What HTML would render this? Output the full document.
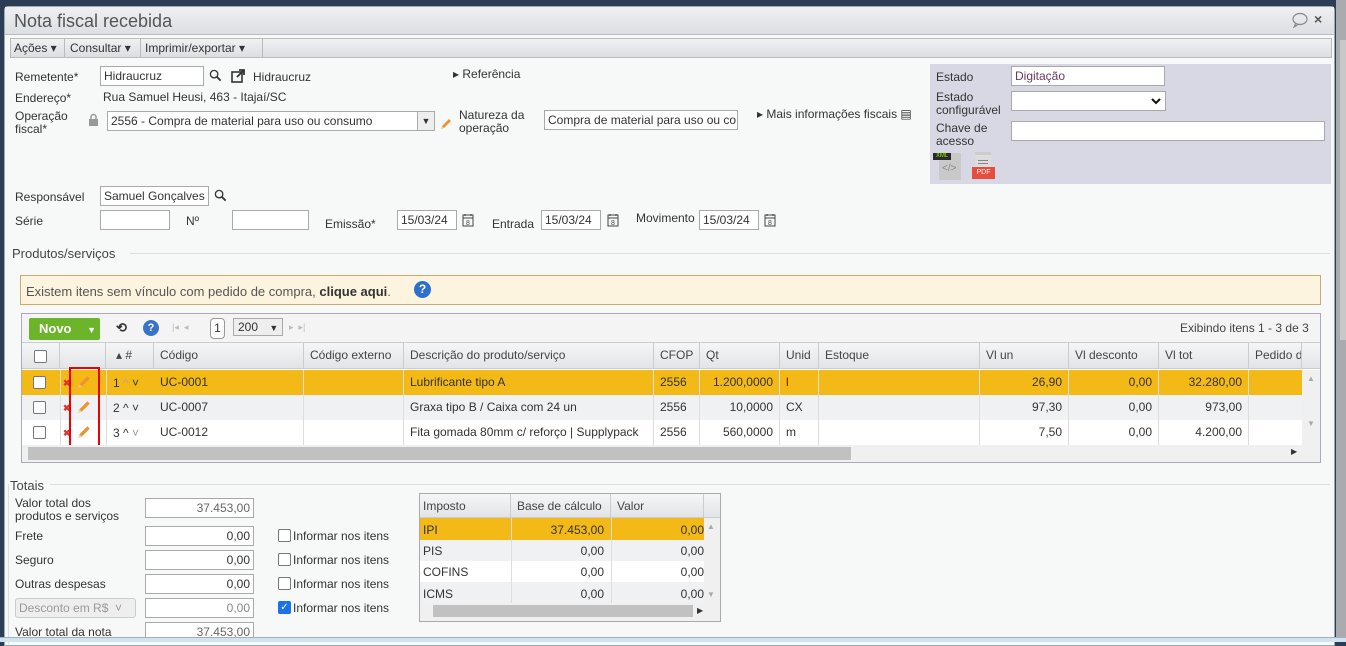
<!DOCTYPE html>
<html><head><meta charset="utf-8"><style>
*{box-sizing:border-box;margin:0;padding:0}
body{width:1346px;height:642px;overflow:hidden;background:#2c3e55;font-family:"Liberation Sans",Arial,sans-serif;font-size:12px;color:#333;position:relative}
.a{position:absolute}
.win{left:4px;top:6px;width:1331px;height:640px;background:#f7f8f8;border:1px solid #9aa;border-radius:4px 4px 0 0}
.title{left:5px;top:7px;width:1329px;height:28px;background:linear-gradient(#eef0f2,#dcdfe3);border-bottom:1px solid #b8bcc2}
.inp{position:absolute;background:#fff;border:1px solid #a9a9a9;height:20px;font-size:12px;padding:2px 3px;white-space:nowrap;overflow:hidden}
.lbl{position:absolute;font-size:12px;color:#333;line-height:13px}
.hd{position:absolute;top:342px;height:27px;line-height:27px;padding-left:6px;border-right:1px solid #ccc;color:#444;font-size:12px}
.cell{position:absolute;height:25px;line-height:25px;padding:0 6px;border-right:1px solid #ddd;font-size:12px;white-space:nowrap;overflow:hidden}
.r{text-align:right}
.cb{position:absolute;width:13px;height:13px;border:1px solid #777;border-radius:2px;background:#fff}
</style></head><body>
<svg width="0" height="0" style="position:absolute"><defs>
<symbol id="mag" viewBox="0 0 14 14"><circle cx="5.5" cy="5.5" r="4" fill="none" stroke="#333" stroke-width="1.4"/><path d="M8.5 8.5 L12.5 12.5" stroke="#333" stroke-width="2"/></symbol>
<symbol id="cal" viewBox="0 0 12 14"><rect x="1" y="2" width="10" height="11" fill="none" stroke="#444" stroke-width="1"/><path d="M3 1V3M9 1V3M1 5H11" stroke="#444"/><text x="6" y="12" font-size="7" text-anchor="middle" fill="#444" font-family="Liberation Sans">8</text></symbol>
<symbol id="pen" viewBox="0 0 14 14"><path d="M2 12 L3 9 L10 2 L12 4 L5 11 Z" fill="#f0922e"/><path d="M2 12 L3 9 L5 11 Z" fill="#f6d0a0"/></symbol>
</defs></svg>
<div class="a" style="left:1336px;top:0;width:10px;height:642px;background:#a9abae"></div>
<div class="a" style="left:1340px;top:40px;width:6px;height:300px;background:#c8c8c8"></div>
<div class="a win"></div>
<div class="a title"></div>
<div class="a" style="left:14px;top:11px;font-size:18px;color:#555">Nota fiscal recebida</div>
<svg class="a" style="left:1291px;top:12px" width="18" height="16"><ellipse cx="9" cy="7" rx="7" ry="5.5" fill="none" stroke="#888" stroke-width="1.2"/><path d="M5 11 L3 15 L8 12" fill="none" stroke="#888" stroke-width="1.2"/></svg>
<div class="a" style="left:1314px;top:11px;font-size:14px;font-weight:bold;color:#555">×</div>
<div class="a" style="left:10px;top:38px;width:1322px;height:20px;background:linear-gradient(#f0f1f3,#dcdee2);border:1px solid #bbb"></div>
<div class="a" style="left:14px;top:41px;color:#333">Ações ▾</div>
<div class="a" style="left:64px;top:38px;width:1px;height:20px;background:#bbb"></div>
<div class="a" style="left:70px;top:41px">Consultar ▾</div>
<div class="a" style="left:140px;top:38px;width:1px;height:20px;background:#bbb"></div>
<div class="a" style="left:145px;top:41px">Imprimir/exportar ▾</div>
<div class="a" style="left:262px;top:38px;width:1px;height:20px;background:#bbb"></div>
<div class="lbl" style="left:15px;top:71px">Remetente*</div>
<div class="inp" style="left:100px;top:66px;width:104px">Hidraucruz</div>
<svg class="a" style="left:209px;top:69px" width="13" height="13"><use href="#mag"/></svg>
<svg class="a" style="left:231px;top:69px" width="15" height="15"><rect x="1" y="3" width="10" height="10" fill="none" stroke="#333" stroke-width="1.6"/><path d="M6 8 L13 1 M8 1 H13 V6" stroke="#333" stroke-width="1.8" fill="none"/></svg>
<div class="lbl" style="left:253px;top:71px">Hidraucruz</div>
<div class="lbl" style="left:453px;top:68px">▸ Referência</div>
<div class="lbl" style="left:15px;top:92px">Endereço*</div>
<div class="lbl" style="left:103px;top:91px">Rua Samuel Heusi, 463 - Itajaí/SC</div>
<div class="lbl" style="left:15px;top:110px">Operação<br>fiscal*</div>
<svg class="a" style="left:88px;top:113px" width="11" height="14"><path d="M3 6V4a2.5 2.5 0 0 1 5 0v2" fill="none" stroke="#999" stroke-width="1.5"/><rect x="1" y="6" width="9" height="7" fill="#999"/></svg>
<div class="inp" style="left:107px;top:111px;width:328px">2556 - Compra de material para uso ou consumo</div>
<div class="a" style="left:417px;top:112px;width:17px;height:18px;background:#eee;border-left:1px solid #aaa;font-size:9px;text-align:center;line-height:18px">▼</div>
<svg class="a" style="left:439px;top:117px" width="14" height="14"><use href="#pen"/></svg>
<div class="lbl" style="left:459px;top:109px">Natureza da<br>operação</div>
<div class="inp" style="left:544px;top:110px;width:194px;height:20px">Compra de material para uso ou co</div>
<div class="lbl" style="left:757px;top:108px">▸ Mais informações fiscais ▤</div>
<div class="a" style="left:930px;top:64px;width:401px;height:120px;background:#d8d8e4"></div>
<div class="lbl" style="left:936px;top:71px">Estado</div>
<div class="inp" style="left:1011px;top:66px;width:154px;color:#6a3a5a">Digitação</div>
<div class="lbl" style="left:936px;top:91px">Estado<br>configurável</div>
<div class="inp" style="left:1011px;top:91px;width:155px"></div>
<svg class="a" style="left:1151px;top:97px" width="10" height="8"><path d="M1 2 L5 6 L9 2" fill="none" stroke="#111" stroke-width="2"/></svg>
<div class="lbl" style="left:936px;top:122px">Chave de<br>acesso</div>
<div class="inp" style="left:1011px;top:121px;width:314px"></div>
<div class="a" style="left:939px;top:153px;width:22px;height:27px;background:#c9c9c9"></div>
<div class="a" style="left:933px;top:153px;width:18px;height:7px;background:#2a2a2a;color:#9f0;font-size:6px;line-height:7px;text-align:center">XML</div>
<div class="a" style="left:942px;top:163px;color:#888;font-size:10px">&lt;/&gt;</div>
<div class="a" style="left:975px;top:152px;width:16px;height:26px;background:#ddd;border-top:3px solid #ccc"></div>
<div class="a" style="left:978px;top:160px;width:10px;height:1px;background:#888"></div>
<div class="a" style="left:978px;top:163px;width:10px;height:1px;background:#888"></div>
<div class="a" style="left:972px;top:167px;width:23px;height:12px;background:#e74c3c;color:#fff;font-size:7px;line-height:12px;text-align:center">PDF</div>
<div class="lbl" style="left:15px;top:191px">Responsável</div>
<div class="inp" style="left:100px;top:186px;width:109px">Samuel Gonçalves</div>
<svg class="a" style="left:214px;top:189px" width="13" height="13"><use href="#mag"/></svg>
<div class="lbl" style="left:15px;top:215px">Série</div>
<div class="inp" style="left:100px;top:210px;width:70px"></div>
<div class="lbl" style="left:186px;top:215px">Nº</div>
<div class="inp" style="left:232px;top:210px;width:77px"></div>
<div class="lbl" style="left:325px;top:218px">Emissão*</div>
<div class="inp" style="left:397px;top:210px;width:60px">15/03/24</div>
<svg class="a" style="left:462px;top:213px" width="12" height="14"><use href="#cal"/></svg>
<div class="lbl" style="left:492px;top:218px">Entrada</div>
<div class="inp" style="left:541px;top:210px;width:60px">15/03/24</div>
<svg class="a" style="left:607px;top:213px" width="12" height="14"><use href="#cal"/></svg>
<div class="lbl" style="left:636px;top:212px">Movimento</div>
<div class="inp" style="left:699px;top:210px;width:60px">15/03/24</div>
<svg class="a" style="left:764px;top:213px" width="12" height="14"><use href="#cal"/></svg>
<div class="a" style="left:12px;top:246px;font-size:13px;color:#444">Produtos/serviços</div>
<div class="a" style="left:130px;top:253px;width:1200px;height:1px;background:#ddd"></div>
<div class="a" style="left:20px;top:275px;width:1301px;height:30px;background:#fcf4de;border:1px solid #c8aa6a"></div>
<div class="a" style="left:26px;top:284px;font-size:13px;color:#555">Existem itens sem vínculo com pedido de compra, <b style="color:#333">clique aqui</b>.</div>
<div class="a" style="left:414px;top:281px;width:17px;height:17px;border-radius:50%;background:#2d6fd0;color:#fff;font-size:12px;font-weight:bold;text-align:center;line-height:17px">?</div>
<div class="a" style="left:21px;top:313px;width:1300px;height:150px;border:1px solid #aab;background:#fff"></div>
<div class="a" style="left:22px;top:314px;width:1298px;height:28px;background:#f4f4f4"></div>
<div class="a" style="left:29px;top:318px;width:71px;height:22px;background:#6cb52a;border-radius:2px;color:#fff;font-weight:bold;font-size:13px;line-height:22px;padding-left:10px">Novo <span style="font-size:9px;margin-left:12px">▼</span></div>
<div class="a" style="left:116px;top:320px;font-size:13px;font-weight:bold">⟲</div>
<div class="a" style="left:143px;top:320px;width:16px;height:16px;border-radius:50%;background:#3a74c8;color:#fff;font-size:11px;font-weight:bold;text-align:center;line-height:16px">?</div>
<div class="a" style="left:172px;top:322px;color:#bbb;font-size:9px">|◂ &nbsp;◂</div>
<div class="a" style="left:210px;top:318px;width:15px;height:21px;border:1px solid #999;border-radius:4px;background:#fff;text-align:center;line-height:19px">1</div>
<div class="a" style="left:233px;top:318px;width:50px;height:18px;border:1px solid #aaa;background:#eee;padding-left:4px;line-height:16px">200 <span style="font-size:9px;margin-left:8px">▼</span></div>
<div class="a" style="left:289px;top:322px;color:#bbb;font-size:9px">▸ &nbsp;▸|</div>
<div class="a" style="left:1180px;top:321px;color:#444">Exibindo itens 1 - 3 de 3</div>
<div class="a" style="left:22px;top:342px;width:1298px;height:27px;background:linear-gradient(#f5f6f7,#e2e4e7);border-top:1px solid #ccc;border-bottom:1px solid #ccc"></div>
<div class="hd" style="left:22px;width:38px"></div><div class="cb" style="left:34px;top:350px"></div>
<div class="hd" style="left:60px;width:46px"></div>
<div class="hd" style="left:106px;width:48px;padding-left:10px">▴ #</div>
<div class="hd" style="left:154px;width:150px">Código</div>
<div class="hd" style="left:304px;width:100px">Código externo</div>
<div class="hd" style="left:404px;width:250px">Descrição do produto/serviço</div>
<div class="hd" style="left:654px;width:46px">CFOP</div>
<div class="hd" style="left:700px;width:80px">Qt</div>
<div class="hd" style="left:780px;width:39px">Unid</div>
<div class="hd" style="left:819px;width:161px">Estoque</div>
<div class="hd" style="left:980px;width:89px">Vl un</div>
<div class="hd" style="left:1069px;width:90px">Vl desconto</div>
<div class="hd" style="left:1159px;width:90px">Vl tot</div>
<div class="hd" style="left:1249px;width:53px;overflow:hidden;white-space:nowrap">Pedido de</div>
<div class="a" style="left:22px;top:370px;width:1280px;height:25px;background:#f3b916"></div>
<div class="a" style="left:22px;top:395px;width:1280px;height:25px;background:#f0f1f2"></div>
<div class="a" style="left:22px;top:420px;width:1280px;height:25px;background:#fff"></div>
<div class="a" style="left:1302px;top:370px;width:18px;height:75px;background:#f0f0f0;color:#aaa;font-size:8px;text-align:center;padding-top:4px">▲<br><br><br><br><br>▼</div>
<div class="cb" style="left:33px;top:376px"></div><div class="cb" style="left:33px;top:401px"></div><div class="cb" style="left:33px;top:426px"></div>
<div class="a" style="left:60px;top:370px;width:1px;height:75px;background:#ddd"></div>
<div class="a" style="left:106px;top:370px;width:1px;height:75px;background:#ddd"></div>
<div class="a" style="left:63px;top:378px;color:#d33;font-size:9px;font-weight:bold">✖</div><svg class="a" style="left:76px;top:374px" width="16" height="16"><use href="#pen"/></svg>
<div class="a" style="left:63px;top:403px;color:#d33;font-size:9px;font-weight:bold">✖</div><svg class="a" style="left:76px;top:399px" width="16" height="16"><use href="#pen"/></svg>
<div class="a" style="left:63px;top:428px;color:#d33;font-size:9px;font-weight:bold">✖</div><svg class="a" style="left:76px;top:424px" width="16" height="16"><use href="#pen"/></svg>
<div class="a" style="left:69px;top:367px;width:31px;height:84px;border:2px solid #e00"></div>
<div class="a" style="left:113px;top:376px">1 <span style="color:#c9a">^</span> ˅</div>
<div class="a" style="left:113px;top:401px">2 ^ ˅</div>
<div class="a" style="left:113px;top:426px">3 ^ <span style="color:#999">˅</span></div>
<div class="cell" style="left:154px;top:370px;width:150px">UC-0001</div><div class="cell" style="left:304px;top:370px;width:100px"></div><div class="cell" style="left:404px;top:370px;width:250px">Lubrificante tipo A</div><div class="cell" style="left:654px;top:370px;width:46px">2556</div><div class="cell r" style="left:700px;top:370px;width:80px">1.200,0000</div><div class="cell" style="left:780px;top:370px;width:39px;color:#800">l</div><div class="cell" style="left:819px;top:370px;width:161px"></div><div class="cell r" style="left:980px;top:370px;width:89px">26,90</div><div class="cell r" style="left:1069px;top:370px;width:90px">0,00</div><div class="cell r" style="left:1159px;top:370px;width:90px">32.280,00</div>
<div class="cell" style="left:154px;top:395px;width:150px">UC-0007</div><div class="cell" style="left:304px;top:395px;width:100px"></div><div class="cell" style="left:404px;top:395px;width:250px">Graxa tipo B / Caixa com 24 un</div><div class="cell" style="left:654px;top:395px;width:46px">2556</div><div class="cell r" style="left:700px;top:395px;width:80px">10,0000</div><div class="cell" style="left:780px;top:395px;width:39px">CX</div><div class="cell" style="left:819px;top:395px;width:161px"></div><div class="cell r" style="left:980px;top:395px;width:89px">97,30</div><div class="cell r" style="left:1069px;top:395px;width:90px">0,00</div><div class="cell r" style="left:1159px;top:395px;width:90px">973,00</div>
<div class="cell" style="left:154px;top:420px;width:150px">UC-0012</div><div class="cell" style="left:304px;top:420px;width:100px"></div><div class="cell" style="left:404px;top:420px;width:250px">Fita gomada 80mm c/ reforço | Supplypack</div><div class="cell" style="left:654px;top:420px;width:46px">2556</div><div class="cell r" style="left:700px;top:420px;width:80px">560,0000</div><div class="cell" style="left:780px;top:420px;width:39px">m</div><div class="cell" style="left:819px;top:420px;width:161px"></div><div class="cell r" style="left:980px;top:420px;width:89px">7,50</div><div class="cell r" style="left:1069px;top:420px;width:90px">0,00</div><div class="cell r" style="left:1159px;top:420px;width:90px">4.200,00</div>
<div class="a" style="left:22px;top:445px;width:1298px;height:17px;background:#f0f0f0"></div>
<div class="a" style="left:28px;top:447px;width:823px;height:13px;background:#c1c1c1"></div>
<div class="a" style="left:1291px;top:447px;font-size:8px">▶</div>
<div class="a" style="left:10px;top:478px;font-size:13px;color:#444">Totais</div>
<div class="a" style="left:50px;top:484px;width:1280px;height:1px;background:#ddd"></div>
<div class="a" style="left:8px;top:484px;width:1px;height:160px;background:#ddd"></div>
<div class="lbl" style="left:15px;top:497px">Valor total dos<br>produtos e serviços</div>
<div class="inp r" style="left:145px;top:498px;width:109px;color:#666">37.453,00</div>
<div class="lbl" style="left:15px;top:530px">Frete</div>
<div class="inp r" style="left:145px;top:526px;width:109px">0,00</div>
<div class="lbl" style="left:15px;top:554px">Seguro</div>
<div class="inp r" style="left:145px;top:550px;width:109px">0,00</div>
<div class="lbl" style="left:15px;top:578px">Outras despesas</div>
<div class="inp r" style="left:145px;top:574px;width:109px">0,00</div>
<div class="inp" style="left:15px;top:598px;width:121px;background:#eee;color:#999;border-color:#ccc;border-radius:3px">Desconto em R$ &nbsp;˅</div>
<div class="inp r" style="left:145px;top:598px;width:109px;color:#888">0,00</div>
<div class="lbl" style="left:15px;top:626px">Valor total da nota</div>
<div class="inp r" style="left:145px;top:622px;width:109px;color:#666">37.453,00</div>
<div class="cb" style="left:278px;top:529px"></div><div class="lbl" style="left:293px;top:530px">Informar nos itens</div>
<div class="cb" style="left:278px;top:553px"></div><div class="lbl" style="left:293px;top:554px">Informar nos itens</div>
<div class="cb" style="left:278px;top:577px"></div><div class="lbl" style="left:293px;top:578px">Informar nos itens</div>
<div class="cb" style="left:278px;top:601px;background:#1a73e8;border-color:#1a73e8;color:#fff;font-size:10px;line-height:11px;text-align:center">✓</div><div class="lbl" style="left:293px;top:602px">Informar nos itens</div>
<div class="a" style="left:419px;top:493px;width:302px;height:129px;border:1px solid #aaa;background:#f0f0f0"></div>
<div class="a" style="left:420px;top:494px;width:300px;height:24px;background:linear-gradient(#f5f6f7,#e2e4e7);border-bottom:1px solid #ccc"></div>
<div class="hd" style="left:420px;top:494px;width:91px;height:24px;line-height:24px;padding-left:3px">Imposto</div>
<div class="hd" style="left:511px;top:494px;width:100px;height:24px;line-height:24px">Base de cálculo</div>
<div class="hd" style="left:611px;top:494px;width:93px;height:24px;line-height:24px">Valor</div>
<div class="a" style="left:420px;top:518px;width:284px;height:22px;background:#f3b916"></div>
<div class="a" style="left:420px;top:540px;width:284px;height:21px;background:#f0f1f2"></div>
<div class="a" style="left:420px;top:561px;width:284px;height:21px;background:#fff"></div>
<div class="a" style="left:420px;top:582px;width:284px;height:21px;background:#f0f1f2"></div>
<div class="a" style="left:511px;top:518px;width:1px;height:85px;background:#ddd"></div>
<div class="a" style="left:611px;top:518px;width:1px;height:85px;background:#ddd"></div>
<div class="a" style="left:423px;top:523px">IPI</div><div class="a" style="left:511px;top:523px;width:93px;text-align:right">37.453,00</div><div class="a" style="left:611px;top:523px;width:93px;text-align:right">0,00</div>
<div class="a" style="left:423px;top:544px">PIS</div><div class="a" style="left:511px;top:544px;width:93px;text-align:right">0,00</div><div class="a" style="left:611px;top:544px;width:93px;text-align:right">0,00</div>
<div class="a" style="left:423px;top:565px">COFINS</div><div class="a" style="left:511px;top:565px;width:93px;text-align:right">0,00</div><div class="a" style="left:611px;top:565px;width:93px;text-align:right">0,00</div>
<div class="a" style="left:423px;top:587px">ICMS</div><div class="a" style="left:511px;top:587px;width:93px;text-align:right">0,00</div><div class="a" style="left:611px;top:587px;width:93px;text-align:right">0,00</div>
<div class="a" style="left:707px;top:522px;color:#aaa;font-size:8px">▲</div><div class="a" style="left:707px;top:590px;color:#aaa;font-size:8px">▼</div>
<div class="a" style="left:433px;top:605px;width:260px;height:12px;background:#c1c1c1"></div>
<div class="a" style="left:697px;top:606px;font-size:8px">▶</div>
<div class="a" style="left:0;top:637px;width:1346px;height:5px;background:#cfe4f0;border-top:1px solid #aab"></div>
</body></html>
